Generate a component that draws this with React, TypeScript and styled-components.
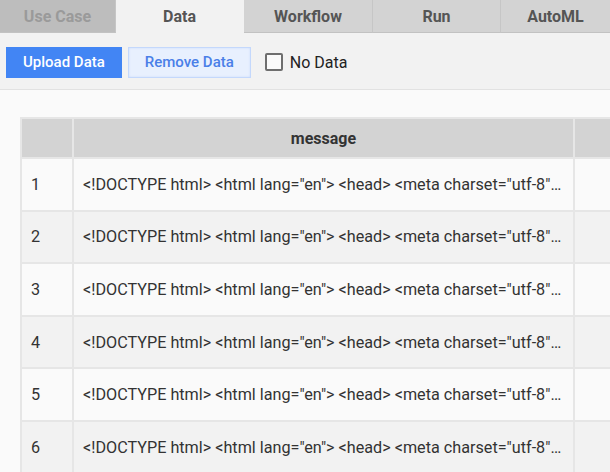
import React from 'react'
import styled, { createGlobalStyle } from 'styled-components'

const GlobalStyle = createGlobalStyle`
  html, body {
    margin: 0;
    padding: 0;
    width: 610px;
    height: 472px;
    overflow: hidden;
    background: #fafafa;
    font-family: Roboto, "Liberation Sans", Arial, sans-serif;
  }
  * { box-sizing: border-box; }
`

const Page = styled.div`
  display: flex;
  flex-direction: column;
  width: 610px;
  height: 472px;
  overflow: hidden;
`

const TabBar = styled.div`
  display: flex;
  height: 33px;
  background: #d3d3d3;
`

const Tab = styled.div<{ $active?: boolean; $disabled?: boolean; $w: number }>`
  flex: 0 0 ${({ $w }) => $w}px;
  display: flex;
  align-items: center;
  justify-content: center;
  font-size: 16px;
  font-weight: 700;
  color: ${({ $disabled }) => ($disabled ? '#9a9a9a' : '#555')};
  background: ${({ $active, $disabled }) => ($active ? '#f2f2f2' : $disabled ? '#bdbdbd' : '#d3d3d3')};
  border-right: 1px solid ${({ $active }) => ($active ? '#f2f2f2' : '#c6c6c6')};
  border-bottom: 1px solid ${({ $active }) => ($active ? '#f2f2f2' : '#c2c2c2')};
  &:last-child { border-right: none; }
`

const Toolbar = styled.div`
  display: flex;
  align-items: center;
  height: 57px;
  padding: 2px 6px 0;
  gap: 6px;
  background: #f2f2f2;
  border-bottom: 1px solid #e2e2e2;
`

const Button = styled.button<{ $primary?: boolean }>`
  height: 31px;
  padding: 0 16px;
  font-family: inherit;
  font-size: 15px;
  font-weight: 500;
  border-radius: 0;
  cursor: pointer;
  color: ${({ $primary }) => ($primary ? '#fff' : '#4a7fe8')};
  background: ${({ $primary }) => ($primary ? '#4285f4' : '#e8f0fe')};
  border: 1px solid ${({ $primary }) => ($primary ? '#4285f4' : '#c4d8fc')};
  box-shadow: ${({ $primary }) => ($primary ? 'none' : 'inset 0 0 2px #c4d8fc')};
`

const CheckLabel = styled.label`
  display: flex;
  align-items: center;
  gap: 7px;
  margin-left: 8px;
  font-size: 16px;
  color: #222;
`

const Box = styled.span`
  width: 18px;
  height: 18px;
  border: 2px solid #6e6e6e;
  border-radius: 2px;
  background: #fafafa;
`

const Content = styled.div`
  flex: 1;
  padding: 27px 0 0 20px;
  background: #fafafa;
  overflow: hidden;
`

const Table = styled.table`
  border-collapse: collapse;
  border: 2px solid #e2e2e2;
  table-layout: fixed;
  width: 700px;
`

const Th = styled.th<{ $w: number }>`
  width: ${({ $w }) => $w}px;
  height: 40px;
  background: #d3d3d3;
  border: 2px solid #e6e6e6;
  font-size: 16px;
  font-weight: 700;
  color: #333;
  text-align: center;
  padding: 0;
`

const Row = styled.tr<{ $odd: boolean }>`
  background: ${({ $odd }) => ($odd ? '#fafafa' : '#f2f2f2')};
`

const Td = styled.td`
  height: 52.6px;
  border: 2px solid #e6e6e6;
  padding: 0 9px;
  font-size: 16.2px;
  color: #333;
  white-space: nowrap;
  overflow: hidden;
`

const tabs = [
  { label: 'Use Case', w: 116, disabled: true },
  { label: 'Data', w: 128, active: true },
  { label: 'Workflow', w: 129 },
  { label: 'Run', w: 128 },
  { label: 'AutoML', w: 109 },
]

const msg = '<!DOCTYPE html> <html lang="en"> <head> <meta charset="utf-8"…'

const App = () => {
  return (
    <>
      <GlobalStyle />
      <Page>
        <TabBar>
          {tabs.map(t => (
            <Tab key={t.label} $w={t.w} $active={t.active} $disabled={t.disabled}>
              {t.label}
            </Tab>
          ))}
        </TabBar>
        <Toolbar>
          <Button $primary>Upload Data</Button>
          <Button>Remove Data</Button>
          <CheckLabel>
            <Box />
            No Data
          </CheckLabel>
        </Toolbar>
        <Content>
          <Table>
            <thead>
              <tr>
                <Th $w={52}></Th>
                <Th $w={501}>message</Th>
                <Th $w={147}></Th>
              </tr>
            </thead>
            <tbody>
              {[1, 2, 3, 4, 5, 6].map(n => (
                <Row key={n} $odd={n % 2 === 1}>
                  <Td>{n}</Td>
                  <Td>{msg}</Td>
                  <Td></Td>
                </Row>
              ))}
            </tbody>
          </Table>
        </Content>
      </Page>
    </>
  )
}

export default App
